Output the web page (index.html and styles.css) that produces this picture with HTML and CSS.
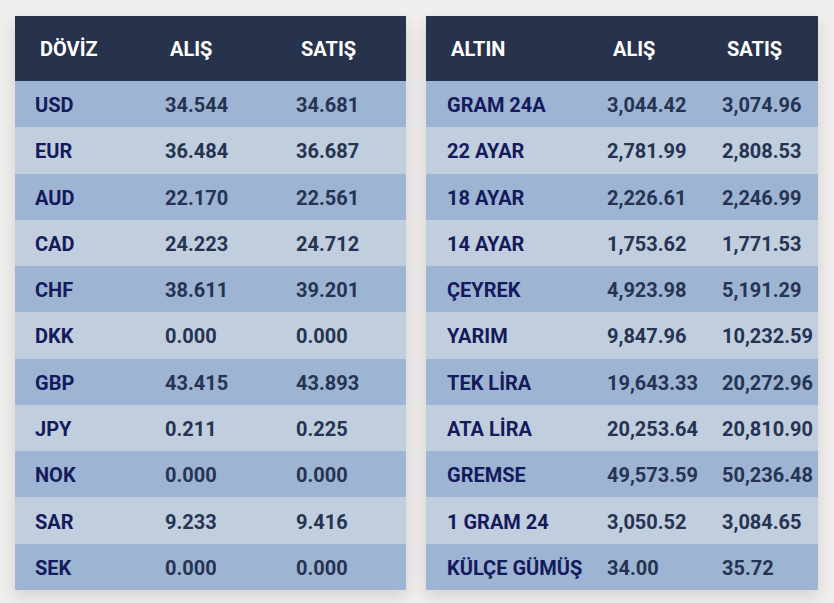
FILE: index.html
```html
<!DOCTYPE html>
<html lang="tr">
<head>
<meta charset="utf-8">
<link rel="stylesheet" href="styles.css">
</head>
<body>
<div class="page">
  <div class="board board-fx">
    <div class="row head"><span>DÖVİZ</span><span>ALIŞ</span><span>SATIŞ</span></div>
    <div class="row"><span class="nm">USD</span><span>34.544</span><span>34.681</span></div>
    <div class="row"><span class="nm">EUR</span><span>36.484</span><span>36.687</span></div>
    <div class="row"><span class="nm">AUD</span><span>22.170</span><span>22.561</span></div>
    <div class="row"><span class="nm">CAD</span><span>24.223</span><span>24.712</span></div>
    <div class="row"><span class="nm">CHF</span><span>38.611</span><span>39.201</span></div>
    <div class="row"><span class="nm">DKK</span><span>0.000</span><span>0.000</span></div>
    <div class="row"><span class="nm">GBP</span><span>43.415</span><span>43.893</span></div>
    <div class="row"><span class="nm">JPY</span><span>0.211</span><span>0.225</span></div>
    <div class="row"><span class="nm">NOK</span><span>0.000</span><span>0.000</span></div>
    <div class="row"><span class="nm">SAR</span><span>9.233</span><span>9.416</span></div>
    <div class="row"><span class="nm">SEK</span><span>0.000</span><span>0.000</span></div>
  </div>
  <div class="board board-gold">
    <div class="row head"><span>ALTIN</span><span>ALIŞ</span><span>SATIŞ</span></div>
    <div class="row"><span class="nm">GRAM 24A</span><span>3,044.42</span><span>3,074.96</span></div>
    <div class="row"><span class="nm">22 AYAR</span><span>2,781.99</span><span>2,808.53</span></div>
    <div class="row"><span class="nm">18 AYAR</span><span>2,226.61</span><span>2,246.99</span></div>
    <div class="row"><span class="nm">14 AYAR</span><span>1,753.62</span><span>1,771.53</span></div>
    <div class="row"><span class="nm">ÇEYREK</span><span>4,923.98</span><span>5,191.29</span></div>
    <div class="row"><span class="nm">YARIM</span><span>9,847.96</span><span>10,232.59</span></div>
    <div class="row"><span class="nm">TEK LİRA</span><span>19,643.33</span><span>20,272.96</span></div>
    <div class="row"><span class="nm">ATA LİRA</span><span>20,253.64</span><span>20,810.90</span></div>
    <div class="row"><span class="nm">GREMSE</span><span>49,573.59</span><span>50,236.48</span></div>
    <div class="row"><span class="nm">1 GRAM 24</span><span>3,050.52</span><span>3,084.65</span></div>
    <div class="row"><span class="nm">KÜLÇE GÜMÜŞ</span><span>34.00</span><span>35.72</span></div>
  </div>
</div>
</body>
</html>
```
FILE: styles.css
```css
* { box-sizing: border-box; }
html, body {
  margin: 0;
  padding: 0;
  width: 834px;
  height: 603px;
  overflow: hidden;
  background: #f1efee;
  font-family: Roboto, "Liberation Sans", sans-serif;
}
.page {
  display: flex;
  gap: 20px;
  padding: 16px 0 0 15px;
  align-items: flex-start;
}
.board {
  display: grid;
  grid-template-rows: 65px repeat(11, 46.27px);
  box-shadow: 0 6px 16px rgba(0, 0, 0, 0.13);
}
.board-fx { width: 391px; }
.board-gold { width: 392px; }
.row {
  display: grid;
  align-items: center;
  font-weight: 700;
  font-size: 20px;
  color: #263352;
  background: #9db5d3;
  white-space: nowrap;
  padding-top: 2px;
}
.row:nth-child(odd) { background: #c0cedd; }
.board-fx .row { grid-template-columns: 130px 131px 130px; }
.board-gold .row { grid-template-columns: 161px 115px 116px; }
.row span { padding-left: 20px; }
.board-gold .row span { padding-left: 21px; }
.board-gold .row span:nth-child(2),
.board-gold .row span:nth-child(3) { padding-left: 20px; }
.row .nm { color: #141a5c; }
.row.head {
  background: #27324d;
  color: #ffffff;
  padding-top: 0;
  padding-bottom: 0;
}
.board-fx .row.head span { padding-left: 25px; }
.board-gold .row.head span { padding-left: 25px; }
.board-gold .row.head span:nth-child(2) { padding-left: 26px; }
.board-gold .row.head span:nth-child(3) { padding-left: 25px; }
```
